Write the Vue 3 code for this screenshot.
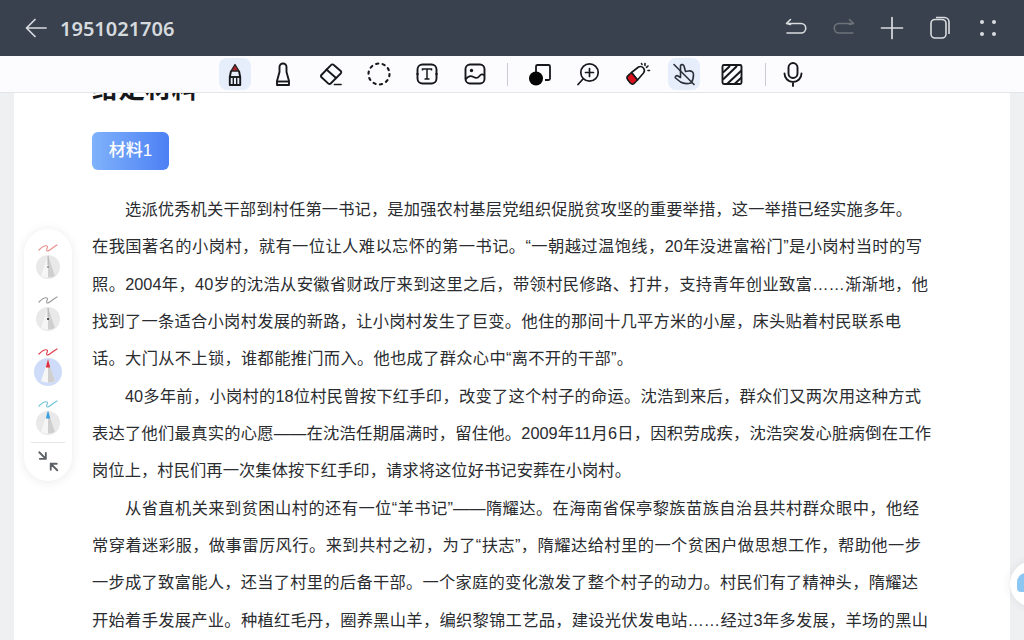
<script setup>
const lines = [
  { t: '选派优秀机关干部到村任第一书记，是加强农村基层党组织促脱贫攻坚的重要举措，这一举措已经实施多年。', end: 912, indent: true },
  { t: '在我国著名的小岗村，就有一位让人难以忘怀的第一书记。“一朝越过温饱线，20年没进富裕门”是小岗村当时的写', end: 922 },
  { t: '照。2004年，40岁的沈浩从安徽省财政厅来到这里之后，带领村民修路、打井，支持青年创业致富……渐渐地，他', end: 928 },
  { t: '找到了一条适合小岗村发展的新路，让小岗村发生了巨变。他住的那间十几平方米的小屋，床头贴着村民联系电', end: 901 },
  { t: '话。大门从不上锁，谁都能推门而入。他也成了群众心中“离不开的干部”。', end: 633 },
  { t: '40多年前，小岗村的18位村民曾按下红手印，改变了这个村子的命运。沈浩到来后，群众们又两次用这种方式', end: 921, indent: true },
  { t: '表达了他们最真实的心愿——在沈浩任期届满时，留住他。2009年11月6日，因积劳成疾，沈浩突发心脏病倒在工作', end: 931 },
  { t: '岗位上，村民们再一次集体按下红手印，请求将这位好书记安葬在小岗村。', end: 631 },
  { t: '从省直机关来到贫困山村的还有一位“羊书记”——隋耀达。在海南省保亭黎族苗族自治县共村群众眼中，他经', end: 919, indent: true },
  { t: '常穿着迷彩服，做事雷厉风行。来到共村之初，为了“扶志”，隋耀达给村里的一个贫困户做思想工作，帮助他一步', end: 921 },
  { t: '一步成了致富能人，还当了村里的后备干部。一个家庭的变化激发了整个村子的动力。村民们有了精神头，隋耀达', end: 918 },
  { t: '开始着手发展产业。种植红毛丹，圈养黑山羊，编织黎锦工艺品，建设光伏发电站……经过3年多发展，羊场的黑山', end: 928 }
]
const lineWidth = (l) => `${l.end - (l.indent ? 125 : 92)}px`

const pens = [
  { ring: false, wave: '#e88f8a', tip: '#8a8a8a', grey: true },
  { ring: false, wave: '#9a9a9a', tip: '#222', grey: true },
  { ring: true, wave: '#df3c48', tip: '#df2f3e', grey: false },
  { ring: false, wave: '#6fc3d6', tip: '#3d9fe0', grey: false }
]
</script>

<template>
  <div class="screen">
    <header class="topbar">
      <div class="title-group">
        <svg class="back" width="24" height="24" viewBox="0 0 24 24" fill="none" stroke="#d9dcdf" stroke-width="1.7" stroke-linecap="round" stroke-linejoin="round">
          <path d="M2.5 12H22M11 3.5 2.5 12l8.5 8.500" />
        </svg>
        <span class="doc-title">1951021706</span>
      </div>
      <div class="top-actions">
        <svg width="24" height="24" viewBox="0 0 24 24" fill="none" stroke="#d9dcdf" stroke-width="1.6" stroke-linecap="round" stroke-linejoin="round">
          <path d="M2.5 7.500H17a4.700 4.700 0 0 1 0 9.500H3M6.500 3.500l-4 4 4 1" />
        </svg>
        <svg width="24" height="24" viewBox="0 0 24 24" fill="none" stroke="#6d7379" stroke-width="1.6" stroke-linecap="round" stroke-linejoin="round">
          <path d="M21.500 7.500H7a4.700 4.700 0 0 0 0 9.500h14M17.500 3.500l4 4-4 1" />
        </svg>
        <svg width="24" height="24" viewBox="0 0 24 24" fill="none" stroke="#d9dcdf" stroke-width="1.7" stroke-linecap="round">
          <path d="M12 1.500v21M1.500 12h21" />
        </svg>
        <svg width="24" height="24" viewBox="0 0 24 24" fill="none" stroke="#d9dcdf" stroke-width="1.6">
          <rect x="3" y="3.500" width="15" height="18.500" rx="4" />
          <path d="M8 1.500h8.500A4.500 4.500 0 0 1 21 6v12" />
        </svg>
        <svg width="24" height="24" viewBox="0 0 24 24" fill="#d9dcdf">
          <circle cx="6" cy="6" r="2" /><circle cx="18" cy="6" r="2" />
          <circle cx="6" cy="18" r="2" /><circle cx="18" cy="18" r="2" />
        </svg>
      </div>
    </header>

    <nav class="toolbar">
      <div class="tool-group">
        <button class="tool active">
          <svg viewBox="0 0 32 32" fill="none" stroke="#16181b" stroke-width="1.9" stroke-linejoin="round">
            <path d="M16 6.500 20 13h-8z" fill="#a8242f" stroke="#222" stroke-width="1.300" />
            <path d="M12 13 10.800 19v8h10.400v-8L20 13" />
            <path d="M10.800 19h10.400" />
            <path d="M14.300 20v7M17.700 20v7" stroke-width="1.400" />
          </svg>
        </button>
        <button class="tool">
          <svg viewBox="0 0 32 32" fill="none" stroke="#16181b" stroke-width="1.9" stroke-linejoin="round">
            <path d="M12.500 14V9a3.500 3.500 0 0 1 7 0v5l2.500 9v4H10v-4z" />
            <path d="M10 23.500h12" />
          </svg>
        </button>
        <button class="tool">
          <svg viewBox="0 0 32 32" fill="none" stroke="#16181b" stroke-width="1.9" stroke-linejoin="round" stroke-linecap="round">
            <path d="M18.500 6.800 25.700 13a1.600 1.600 0 0 1 .1 2.300L15.700 25.500a1.600 1.600 0 0 1-2.300.1L6.500 19.300a1.600 1.600 0 0 1-.1-2.300L16.200 6.900a1.600 1.600 0 0 1 2.300-.1z" />
            <path d="m11.500 11.500 9.500 8.500" />
            <path d="M19.500 26.500H26" stroke-width="1.700" />
          </svg>
        </button>
        <button class="tool">
          <svg viewBox="0 0 32 32" fill="none" stroke="#16181b" stroke-width="2.100" stroke-linecap="round">
            <circle cx="16" cy="16" r="10.500" stroke-dasharray="2.300 4.300" />
          </svg>
        </button>
        <button class="tool">
          <svg viewBox="0 0 32 32" fill="none" stroke="#16181b" stroke-width="1.900">
            <rect x="6.500" y="6.500" width="19" height="19" rx="5" />
            <path d="M11.500 12.500v-1.500h9v1.500M16 11v10M13.500 21h5" stroke-width="1.500" />
            <circle cx="6.500" cy="16" r="1.200" fill="#16181b" stroke="none" />
            <circle cx="25.500" cy="16" r="1.200" fill="#16181b" stroke="none" />
          </svg>
        </button>
        <button class="tool">
          <svg viewBox="0 0 32 32" fill="none" stroke="#16181b" stroke-width="1.900" stroke-linejoin="round">
            <rect x="6.500" y="6.500" width="19" height="19" rx="4.500" />
            <circle cx="12.500" cy="12.500" r="1.700" fill="#16181b" stroke="none" />
            <path d="M6.500 21.500c3-4 5.500-4 8-2.500s4.500 1 6-1 3.500-2 5-.5" stroke-width="1.700" />
          </svg>
        </button>
      </div>
      <span class="sep first"></span>
      <div class="tool-group">
        <button class="tool">
          <svg viewBox="0 0 32 32" fill="none" stroke="#16181b" stroke-width="1.800">
            <path d="M13 7h11.500a1.500 1.500 0 0 1 1.500 1.500v12a1.500 1.500 0 0 1-1.500 1.500H21" />
            <path d="M13.500 7a1.500 1.500 0 0 0-1.500 1.500V14" />
            <circle cx="12" cy="20.500" r="7" fill="#050505" stroke="none" />
          </svg>
        </button>
        <button class="tool">
          <svg viewBox="0 0 32 32" fill="none" stroke="#16181b" stroke-width="1.700" stroke-linecap="round">
            <circle cx="17.500" cy="14.500" r="8.700" />
            <path d="M17.500 10.500v8M13.500 14.500h8" />
            <path d="M11 21 6 26.500" />
          </svg>
        </button>
        <button class="tool">
          <svg viewBox="0 0 32 32" fill="none" stroke="#16181b" stroke-width="1.600" stroke-linecap="round" stroke-linejoin="round">
            <path d="m11.500 14.500 7-5.500a4 4 0 0 1 5 6l-6 7z" fill="#fff" />
            <path d="m11.500 14.500-3.500 3.200a3 3 0 0 0-.3 4l2.600 3.300a3 3 0 0 0 4 .3l3.200-3.300z" fill="#d8121c" />
            <path d="M25 5.500v2M28 8l-1.500 1.300M29.500 12.500h-1.500M21.500 5.500l.5 1" />
          </svg>
        </button>
        <button class="tool active">
          <svg viewBox="0 0 32 32" fill="none" stroke="#2a3038" stroke-width="1.600" stroke-linecap="round" stroke-linejoin="round">
            <path d="M12.500 7.500c1-1.500 3-1 3.500.5l1.500 5.500 3-.5c3-.5 5 1 5 3.500 0 4-.5 6-2.500 8.500-4 1-8 .5-10.500-1l-5-4c-1-1.500 1-3 2.500-2l2.500 1.500z" />
            <path d="M6 6.500 26 26.500" />
          </svg>
        </button>
        <button class="tool">
          <svg viewBox="0 0 32 32" fill="none" stroke="#16181b">
            <rect x="6.500" y="7" width="19" height="19" rx="1.500" stroke-width="1.900" />
            <path d="M7 14.500 14 8M7 21.500 21 8M11 26 25.500 12.500M18.500 26l7-6.500" stroke-width="2" />
          </svg>
        </button>
      </div>
      <span class="sep second"></span>
      <button class="tool mic">
        <svg viewBox="0 0 32 32" fill="none" stroke="#16181b" stroke-width="1.900" stroke-linecap="round">
          <rect x="11.500" y="5" width="9" height="15" rx="4.500" />
          <path d="M7.500 15.500a8.500 8.500 0 0 0 17 0M16 24v4" />
        </svg>
      </button>
    </nav>

    <main class="workspace">
      <article class="paper">
        <h1 class="heading">给定材料</h1>
        <div class="badge">材料1</div>
        <div class="body-text">
          <span
            v-for="(l, i) in lines"
            :key="i"
            class="line"
            :class="{ indented: l.indent }"
            :style="{ width: lineWidth(l) }"
          >{{ l.t }}</span>
        </div>
      </article>

      <aside class="palette">
        <div v-for="(p, i) in pens" :key="i" class="pen" :class="{ selected: p.ring }">
          <svg class="wave" width="22" height="10" viewBox="0 0 22 10" fill="none" :stroke="p.wave" stroke-width="1.200" stroke-linecap="round">
            <path d="M2 7c3-3 6-5 8-4 2 1-2 4 0 5 2 .5 6-4 10-6" />
          </svg>
          <span class="pen-disc">
            <svg viewBox="0 0 28 28" width="28" height="28">
              <path d="M14 2 21 23q-7 3-14 0z" fill="#f6f6f6" />
              <path d="M14 2 21 23q-3.500 1.500-7 1.500z" fill="#cfcfcf" />
              <path v-if="p.grey" d="M14 3v9" stroke="#999" stroke-width=".7" />
              <circle v-if="p.grey" cx="14" cy="14" r="1" :fill="p.tip" />
              <path v-else d="M14 1 16.200 9.500h-4.400z" :fill="p.tip" />
            </svg>
          </span>
        </div>
        <hr class="palette-rule" />
        <svg class="collapse" width="24" height="24" viewBox="0 0 22 22" fill="none" stroke="#5d6167" stroke-width="1.700" stroke-linecap="round">
          <path d="M3 3l6 6M3.500 9H9V3.500M19.500 19.500l-6-6M13.500 19V13.500H19" />
        </svg>
      </aside>

      <div class="float-tab"><span class="float-glyph"></span></div>
    </main>
  </div>
</template>

<style>
html, body { margin: 0; background: #eff0f2; }
</style>

<style scoped>
.screen {
  width: 1024px;
  height: 640px;
  display: flex;
  flex-direction: column;
  overflow: hidden;
  font-family: "Liberation Sans", "Noto Sans CJK SC", sans-serif;
}
.topbar {
  height: 56px;
  flex: none;
  background: #38414d;
  display: flex;
  align-items: center;
  justify-content: space-between;
  padding: 0 24px 0 24px;
}
.title-group { display: flex; align-items: center; gap: 12px; }
.doc-title {
  font-family: "Noto Sans", sans-serif;
  font-size: 20px;
  font-weight: 600;
  color: #d6dade;
}
.top-actions { display: flex; align-items: center; gap: 24px; }
.top-actions svg { display: block; }
.toolbar {
  height: 36px;
  flex: none;
  background: #fcfcfe;
  border-bottom: 1px solid #e3e5e9;
  display: flex;
  align-items: center;
  padding: 0 0 0 219px;
  position: relative;
  z-index: 2;
}
.tool-group { display: flex; gap: 16px; }
.tool {
  width: 32px;
  height: 32px;
  padding: 0;
  border: 0;
  background: none;
  border-radius: 8px;
  display: block;
}
.tool svg { display: block; width: 32px; height: 32px; }
.tool.active { background: #e6eefb; }
.sep { width: 1px; height: 23px; background: #c9ccd0; flex: none; }
.sep.first { margin: 0 16px 0 16px; }
.sep.second { margin: 0 11px 0 17px; }
.workspace {
  position: relative;
  flex: 1;
  min-height: 0;
  overflow: hidden;
  background: #eff0f2;
  padding-left: 14px;
}
.paper {
  width: 996px;
  height: 100%;
  background: #fff;
  box-sizing: border-box;
  padding-left: 78px;
  overflow: hidden;
}
.heading {
  margin: -22px 0 0;
  font-size: 26.5px;
  line-height: 36px;
  height: 36px;
  font-weight: 700;
  color: #16181b;
}
.badge {
  width: 77px;
  height: 38px;
  margin-top: 25px;
  box-sizing: border-box;
  line-height: 38px;
  text-align: center;
  color: #fff;
  font-size: 17px;
  font-weight: 500;
  border-radius: 6px;
  background: linear-gradient(90deg, #7fb2fb, #4d80f4);
}
.body-text { margin-top: 21px; }
.line {
  display: block;
  height: 37.35px;
  line-height: 37.35px;
  font-size: 16.3px;
  color: #2a2c2f;
  white-space: nowrap;
  text-align: justify;
  text-align-last: justify;
}
.line.indented { margin-left: 33px; }
.palette {
  position: absolute;
  left: 24px;
  top: 136px;
  width: 48px;
  height: 252px;
  box-sizing: border-box;
  padding-top: 14px;
  background: #fff;
  border-radius: 24px;
  box-shadow: 0 1px 10px rgba(40, 50, 70, 0.1);
  display: flex;
  flex-direction: column;
  align-items: center;
}
.pen {
  width: 48px;
  height: 52px;
  display: flex;
  flex-direction: column;
  align-items: center;
}
.wave { display: block; flex: none; }
.pen-disc {
  width: 24px;
  height: 24px;
  margin-top: 2px;
  border-radius: 50%;
  background: #e9e9ea;
  display: flex;
  align-items: center;
  justify-content: center;
  overflow: hidden;
  flex: none;
}
.pen-disc svg { display: block; flex: none; }
.pen.selected .pen-disc { width: 28px; height: 28px; margin-top: 1px; background: #cfdcf9; }
.palette-rule {
  width: 34px;
  margin: -9px 0 0;
  border: 0;
  border-top: 1px solid #e6e7ea;
}
.collapse { display: block; margin-top: 6px; }
.float-tab {
  position: absolute;
  left: 1010px;
  top: 468px;
  width: 46px;
  height: 46px;
  border-radius: 50%;
  background: #fff;
  box-shadow: 0 0 8px rgba(60, 70, 90, 0.12);
}
.float-glyph {
  position: absolute;
  left: 7px;
  top: 12px;
  width: 20px;
  height: 19px;
  border-radius: 9px 9px 4px 4px;
  background: #8cc6f3;
}
</style>
